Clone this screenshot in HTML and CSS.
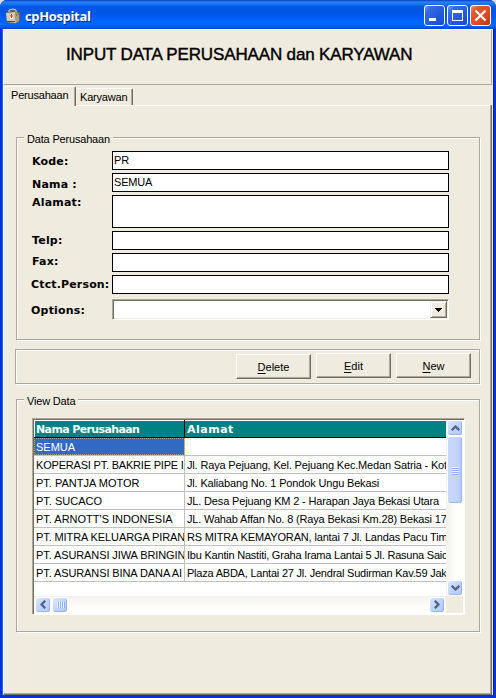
FILE: index.html
```html
<!DOCTYPE html>
<html lang="id">
<head>
<meta charset="utf-8">
<title>cpHospital</title>
<link rel="stylesheet" href="styles.css">
</head>
<body>
<div class="window">
  <header class="titlebar">
    <svg class="app-icon" width="16" height="16" viewBox="0 0 16 16">
      <path d="M1 4l8-2 6 2v9l-5 3-8-1z" fill="#6b6350"/>
      <path d="M1 5l9-1 1 11-9-1z" fill="#d2cbb4"/>
      <path d="M10 4l4 1v8l-3 2z" fill="#a69d80"/>
      <path d="M4 4V2l4-1 3 1v2" fill="none" stroke="#ded9c8"/>
      <path d="M5 6h3v5H5z" fill="#fff"/>
      <path d="M6.500 6v4M5 8h3" stroke="#e02525"/>
      <path d="M11 7h1M13 6h1M2 13.500h8" stroke="#514a38"/>
    </svg>
    <span class="app-title">cpHospital</span>
    <div class="controls">
      <svg class="ctl" width="21" height="21"><rect x=".5" y=".5" width="20" height="20" rx="2.5"/><path d="M5 13h7v3H5z" fill="#fff"/></svg>
      <svg class="ctl" width="21" height="21"><rect x=".5" y=".5" width="20" height="20" rx="2.5"/><path d="M5 5h11v11H5zM6 8v7h9V8z" fill="#fff" fill-rule="evenodd"/></svg>
      <svg class="ctl close" width="21" height="21"><rect x=".5" y=".5" width="20" height="20" rx="2.5"/><path d="M5.5 5.5l10 10M15.500 5.500l-10 10" stroke="#fff" stroke-width="2.200"/></svg>
    </div>
  </header>
  <main class="client">
    <div class="banner"><h1>INPUT DATA PERUSAHAAN dan KARYAWAN</h1></div>
    <nav class="tabs">
      <div class="tab active"><span>Perusahaan</span></div>
      <div class="tab"><span>Karyawan</span></div>
      <div class="tab-rest"></div>
    </nav>
    <section class="page">
      <div class="group form">
        <div class="legend">Data Perusahaan</div>
        <div class="field kode"><label>Kode:</label><div class="input">PR</div></div>
        <div class="field nama"><label>Nama :</label><div class="input">SEMUA</div></div>
        <div class="field alamat"><label>Alamat:</label><div class="input tall"></div></div>
        <div class="field telp"><label>Telp:</label><div class="input"></div></div>
        <div class="field fax"><label>Fax:</label><div class="input"></div></div>
        <div class="field person"><label>Ctct.Person:</label><div class="input"></div></div>
        <div class="field options"><label>Options:</label>
          <div class="combo"><div class="drop"><svg width="7" height="4" shape-rendering="crispEdges"><path d="M0 0h7v1H0zM1 1h5v1H1zM2 2h3v1H2zM3 3h1v1H3z"/></svg></div></div>
        </div>
      </div>
      <div class="actions">
        <div class="btn delete"><span class="key">D</span>elete</div>
        <div class="btn"><span class="key">E</span>dit</div>
        <div class="btn"><span class="key">N</span>ew</div>
      </div>
      <div class="group view">
        <div class="legend">View Data</div>
        <div class="grid">
          <div class="table">
            <div class="row head"><div class="c1">Nama Perusahaan</div><div class="c2">Alamat</div></div>
            <div class="row"><div class="c1 selected">SEMUA</div><div class="c2"></div></div>
            <div class="row"><div class="c1 tight">KOPERASI PT. BAKRIE PIPE I</div><div class="c2">Jl. Raya Pejuang, Kel. Pejuang Kec.Medan Satria - Kot</div></div>
            <div class="row"><div class="c1">PT. PANTJA MOTOR</div><div class="c2">Jl. Kaliabang No. 1 Pondok Ungu Bekasi</div></div>
            <div class="row"><div class="c1">PT. SUCACO</div><div class="c2">JL. Desa Pejuang KM 2 - Harapan Jaya Bekasi Utara</div></div>
            <div class="row"><div class="c1">PT. ARNOTT'S INDONESIA</div><div class="c2">JL. Wahab Affan No. 8 (Raya Bekasi Km.28) Bekasi 17</div></div>
            <div class="row"><div class="c1 snug">PT. MITRA KELUARGA PIRAN</div><div class="c2">RS MITRA KEMAYORAN, lantai 7 Jl. Landas Pacu Tim</div></div>
            <div class="row"><div class="c1 snug">PT. ASURANSI JIWA BRINGIN</div><div class="c2 close-set">Ibu Kantin Nastiti, Graha Irama Lantai 5 Jl. Rasuna Said</div></div>
            <div class="row"><div class="c1 snug">PT. ASURANSI BINA DANA AI</div><div class="c2 close-set">Plaza ABDA, Lantai 27 Jl. Jendral Sudirman Kav.59 Jak</div></div>
          </div>
          <div class="vscroll">
            <div class="sb"><svg width="9" height="6"><path d="M.7 5.200l3.800-3.700 3.800 3.700"/></svg></div>
            <div class="sb vthumb"><i></i><i></i><i></i><i></i></div>
            <div class="sb end"><svg width="9" height="6"><path d="M.7.800l3.800 3.700L8.300.800"/></svg></div>
          </div>
          <div class="hscroll">
            <div class="sb"><svg width="6" height="9"><path d="M5.200.700L1.500 4.500l3.700 3.800"/></svg></div>
            <div class="sb hthumb"><i></i><i></i><i></i><i></i></div>
            <div class="sb end"><svg width="6" height="9"><path d="M.8.700l3.700 3.800L.8 8.300"/></svg></div>
          </div>
          <div class="corner"></div>
        </div>
      </div>
    </section>
  </main>
</div>
</body>
</html>
```
FILE: styles.css
```css
* { box-sizing: border-box; }
body { margin: 0; background: #d9dde6; font: 11px/13px "Liberation Sans", Arial, sans-serif; color: #000; }
.window {
  width: 496px; height: 698px; overflow: hidden; display: flex; flex-direction: column;
  border-radius: 7px 7px 0 0; background: #0831d9;
}
.titlebar {
  height: 29px; flex: none; display: flex; align-items: flex-start; padding: 5px 5px 0 5px;
  background: linear-gradient(#0a3fc0 0, #2b82f5 2px, #1673f5 4px, #0058e6 7px, #0055e5 13px, #0062fa 20px, #0066ff 25px, #005bf0 27px, #003fc8 29px);
}
.app-icon { margin-top: 3px; }
.app-title {
  margin-left: 4px; font: bold 13px/22px "Open Sans", sans-serif; color: #fff;
  letter-spacing: -.35px; text-shadow: 1px 1px 0 #0a2a88;
}
.controls { margin-left: auto; display: flex; gap: 2px; }
.ctl { fill: none; border-radius: 3px; background: linear-gradient(135deg, #7aa0f5 0, #3468e4 25%, #2058dc 65%, #164bc8); }
.ctl rect { stroke: #fff; }
.ctl.close { background: linear-gradient(135deg, #f0a088 0, #e4582e 25%, #dc4a20 65%, #b83010); }
.client {
  flex: 1; display: flex; flex-direction: column; margin: 0 3px 3px; background: #efebde;
  border-top: 1px solid #fff; box-shadow: -1px 0 0 #1668f0, 1px 0 0 #0020c0;
}
.banner { height: 55px; width: 489px; border-bottom: 1px solid #aca899; border-right: 1px solid #aca899; border-left: 1px solid #fff; }
h1 {
  margin: 0; padding: 15px 0 0 62px; font: 17px/20px "Liberation Sans", Arial, sans-serif;
  white-space: nowrap; -webkit-text-stroke: .4px #000; letter-spacing: -.15px;
}
.tabs { height: 19px; margin-top: 1px; display: flex; align-items: flex-start; width: 488px; }
.tab { position: relative; border: 1px solid #fff; border-right-color: #716f64; border-bottom: 0; border-radius: 2px 2px 0 0; box-shadow: inset -1px 0 0 #aca899; white-space: nowrap; letter-spacing: -.2px; }
.tab.active { width: 73px; height: 20px; padding: 2px 0 0 7px; }
.tab:not(.active) { width: 57px; height: 17px; padding: 2px 0 0 4px; margin-top: 2px; border-left: 0; }
.tab-rest { flex: 1; }
.page {
  flex: 1; width: 489px; padding: 32px 0 0 12px; border-left: 1px solid #fff;
  border-right: 1px solid #716f64; border-bottom: 1px solid #716f64;
  box-shadow: inset -1px -1px 0 #aca899;
  background: linear-gradient(90deg, transparent 72px, #fff 72px) 0 0 / 487px 1px no-repeat;
}
.group { width: 464px; border: 1px solid #aca899; box-shadow: 1px 1px 0 #fff, inset 1px 1px 0 #fff; }
.legend { width: max-content; height: 14px; margin: -6px 0 0 7px; padding: 0 3px; background: #efebde; position: relative; line-height: 14px; letter-spacing: -.18px; }
.form { height: 203px; }
.form .legend { margin-bottom: 5px; }
.field { display: flex; align-items: flex-start; margin-bottom: 3px; padding-left: 15px; }
.field label { width: 80px; font: bold 11px/13px "DejaVu Sans", sans-serif; white-space: nowrap; letter-spacing: .2px; }
.input { width: 337px; height: 19px; border: 1px solid #000; background: #fff; padding: 2px 1px; letter-spacing: -.2px; }
.input.tall { height: 33px; }
.kode label { padding-top: 4px; }
.telp label { padding-top: 3px; }
.nama label { padding-top: 5px; }
.alamat label { padding-top: 1px; }
.fax label { padding-top: 2px; }
.person label { padding-top: 3px; margin-left: -1px; width: 81px; letter-spacing: .15px; }
.options label { padding-top: 5px; margin-left: -1px; width: 81px; }
.options { margin-top: 5px; }
.combo { width: 337px; height: 21px; border: 1px solid #aca899; border-right-color: #fff; border-bottom-color: #fff; background: #fff; box-shadow: inset 1px 1px 0 #716f64, inset -1px -1px 0 #f1efe2; display: flex; justify-content: flex-end; padding: 1px; }
.drop { width: 17px; height: 17px; background: #efebde; border: 1px solid #f1efe2; border-right-color: #716f64; border-bottom-color: #716f64; box-shadow: inset 1px 1px 0 #fff, inset -1px -1px 0 #aca899; display: flex; align-items: center; justify-content: center; }
.actions { width: 465px; height: 35px; margin: 9px 0 15px -1px; border: 1px solid #aca899; box-shadow: 1px 1px 0 #fff, inset 1px 1px 0 #fff; display: flex; justify-content: flex-end; gap: 5px; padding: 3px 8px 0 0; }
.btn { width: 75px; height: 25px; border: 1px solid #fff; border-right-color: #716f64; border-bottom-color: #716f64; box-shadow: inset -1px -1px 0 #aca899; line-height: 25px; text-align: center; }
.btn.delete { margin-top: 1px; }
.key { text-decoration: underline; text-underline-offset: 2px; }
.view { height: 233px; }
.view .legend { margin-bottom: 10px; }
.grid {
  margin-left: 15px; width: 433px; height: 197px; border: 1px solid #aca899; border-right-color: #fff; border-bottom-color: #fff;
  background: #fff; box-shadow: inset 1px 1px 0 #716f64; padding: 1px; display: grid;
  grid-template: 176px 17px / 412px 17px;
}
.table { overflow: hidden; }
.row { display: grid; grid-template-columns: 151px 261px; height: 18px; border-bottom: 1px solid #c0c0c0; }
.row > div { height: 17px; overflow: hidden; white-space: nowrap; line-height: 19px; padding-left: 2px; }
.c1 { border-right: 1px solid #c0c0c0; }
.c2 { letter-spacing: -.16px; }
.tight { letter-spacing: -.2px; }
.snug { letter-spacing: -.1px; }
.close-set { letter-spacing: -.22px; }
.head { background: #008284; border-bottom-color: #000; color: #fff; font: bold 11px/16px "DejaVu Sans", sans-serif; box-shadow: inset 1px 1px 0 #fff; }
.head .c1 { border-color: #000; letter-spacing: -.62px; }
.head .c2 { letter-spacing: .5px; }
.c1.selected { background: linear-gradient(#316ac5, #316ac5) 0 0 / 150px 17px no-repeat; outline: 1px dotted #e09a30; outline-offset: -1px; color: #fff; }
.vscroll { display: flex; flex-direction: column; align-items: flex-end; background: linear-gradient(90deg, #f3f1ec, #fefefb 60%); }
.hscroll { display: flex; align-items: center; background: linear-gradient(#f3f1ec, #fefefb 60%); padding-left: 1px; gap: 1px; }
.corner { background: #efebde; }
.sb { width: 16px; height: 16px; flex: none; border: 1px solid #fff; border-radius: 3px; background: linear-gradient(135deg, #dce6ff, #c1d3fc 50%, #b4c9f8); box-shadow: inset -1px -1px 0 #9ab5ea; display: flex; align-items: center; justify-content: center; }
.sb svg { fill: none; stroke: #4d6185; stroke-width: 2.2; }
.vthumb { height: 68px; flex-direction: column; gap: 1px; background: linear-gradient(90deg, #c9d8fc, #c5d5fd 60%, #b5c8f8); }
.vthumb i { width: 7px; height: 1px; background: #eef4fe; box-shadow: 0 1px 0 #8cb0f8; }
.hthumb { gap: 1px; }
.hthumb i { width: 1px; height: 6px; background: #eef4fe; box-shadow: 1px 0 0 #8cb0f8; }
.vscroll .end { margin-top: auto; }
.hscroll .end { margin-left: auto; margin-right: 1px; }
```
